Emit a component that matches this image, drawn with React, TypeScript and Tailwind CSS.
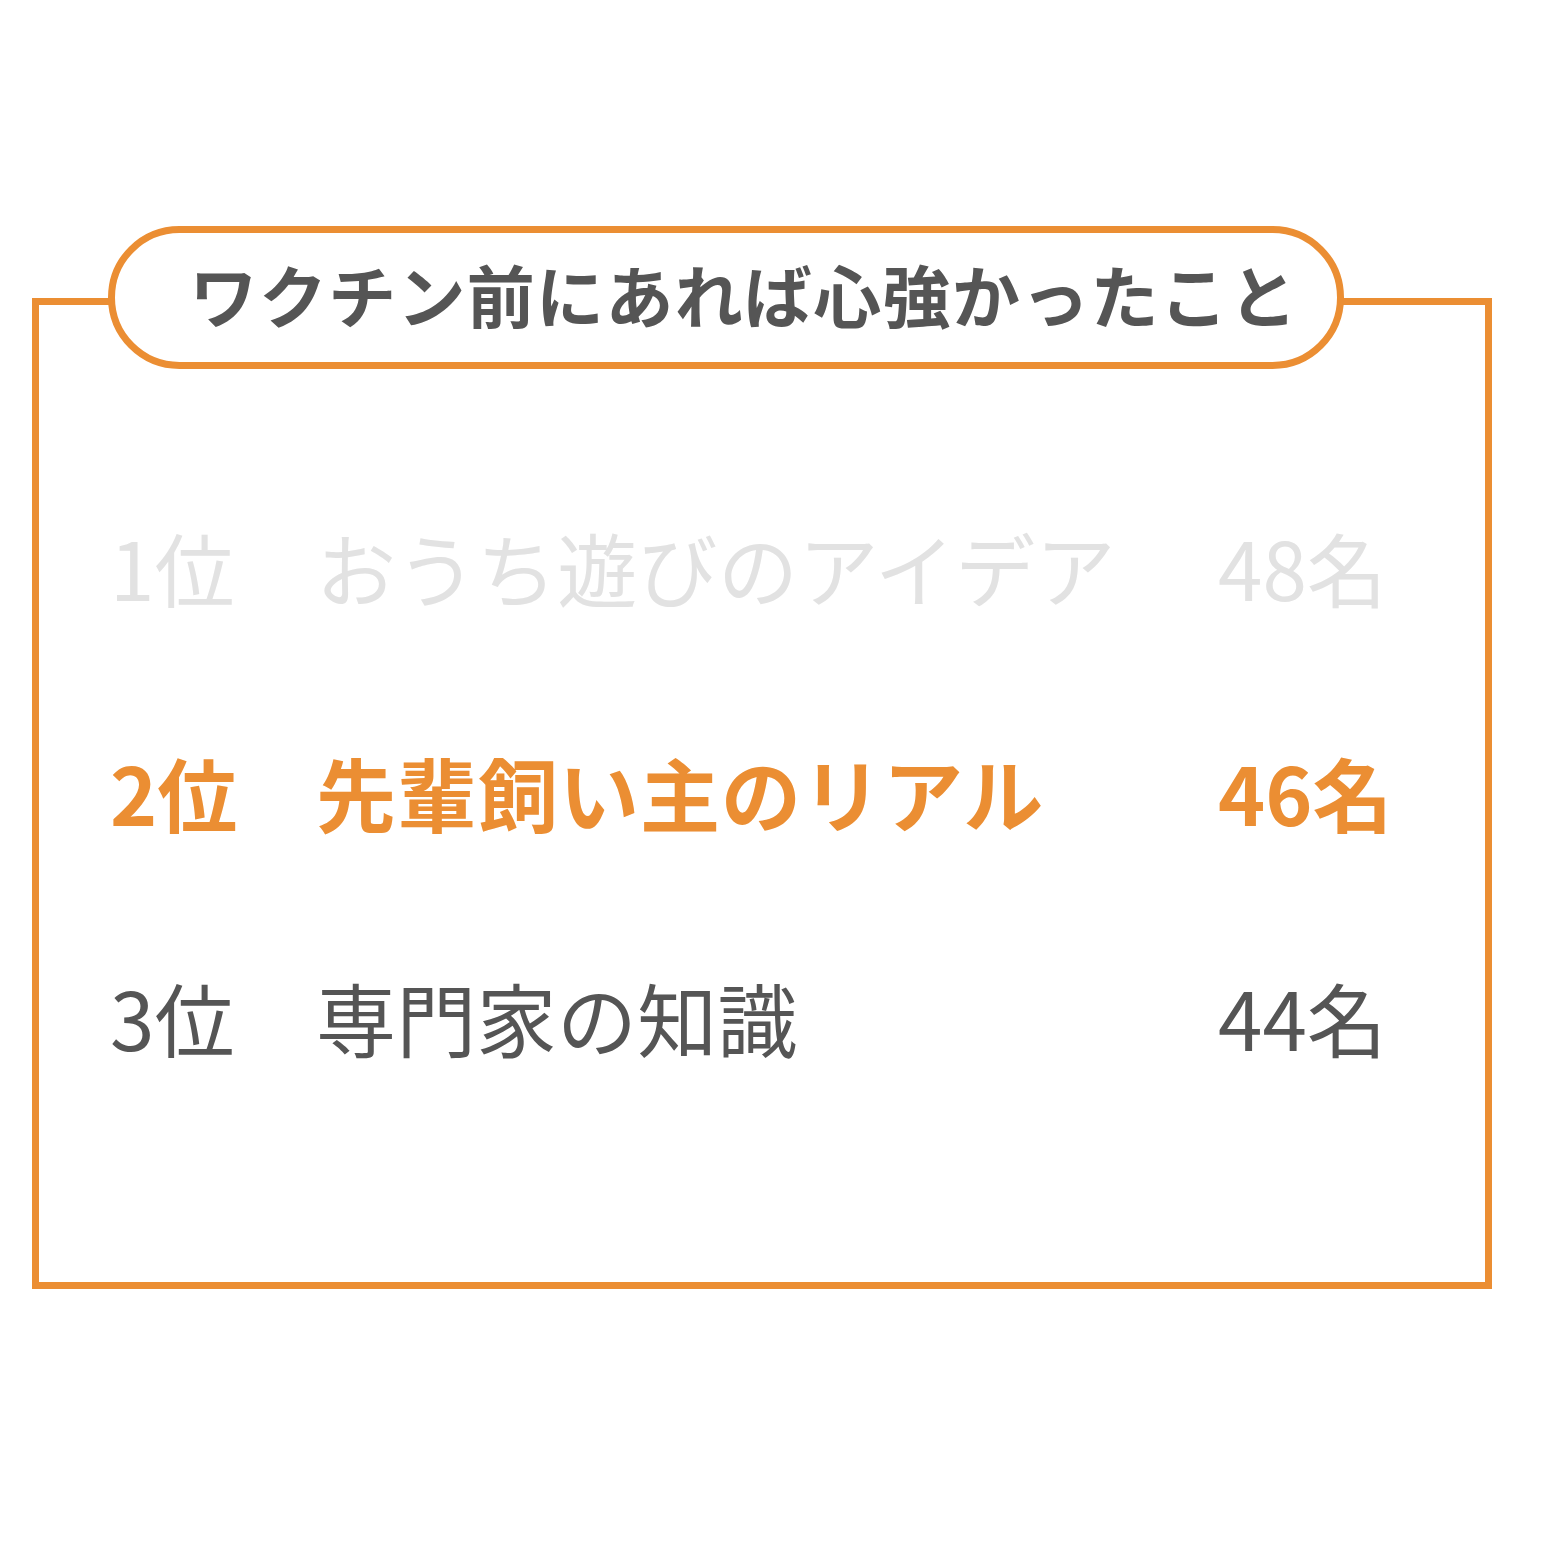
const rows = [
  { rank: "1位", label: "おうち遊びのアイデア", count: "48名", tone: "text-[#e2e2e2] font-normal tracking-[0.4px]" },
  { rank: "2位", label: "先輩飼い主のリアル", count: "46名", tone: "text-[#eb8e33] font-bold tracking-[1px]" },
  { rank: "3位", label: "専門家の知識", count: "44名", tone: "text-[#555555] font-normal tracking-[0.3px]" },
];

export default function App() {
  return (
    <div
      className="w-[1544px] h-[1544px] bg-white pt-[298px] pl-[32px]"
      style={{ fontFamily: '"Noto Sans CJK JP", "Noto Sans", sans-serif' }}
    >
      <div className="relative w-[1460px] h-[991px] border-[7px] border-[#eb8e33]">
        {/* title pill sits over the top border */}
        <div className="absolute left-[69px] top-[-79px] w-[1236px] h-[143px] rounded-full border-[7px] border-[#eb8e33] bg-white flex items-center justify-center">
          <h1 className="text-[68px] leading-none font-bold tracking-[1.3px] text-[#555555] pl-[36px] pb-[8px]">
            ワクチン前にあれば心強かったこと
          </h1>
        </div>
        <div className="pt-[148px] pl-[71px] flex flex-col">
          {rows.map((r) => (
            <div key={r.rank} className={`flex h-[225px] items-center text-[80px] leading-none ${r.tone}`}>
              <span className="w-[206px] tracking-normal">{r.rank}</span>
              <span className="w-[902px]">{r.label}</span>
              <span className="tracking-normal">{r.count}</span>
            </div>
          ))}
        </div>
      </div>
    </div>
  );
}
